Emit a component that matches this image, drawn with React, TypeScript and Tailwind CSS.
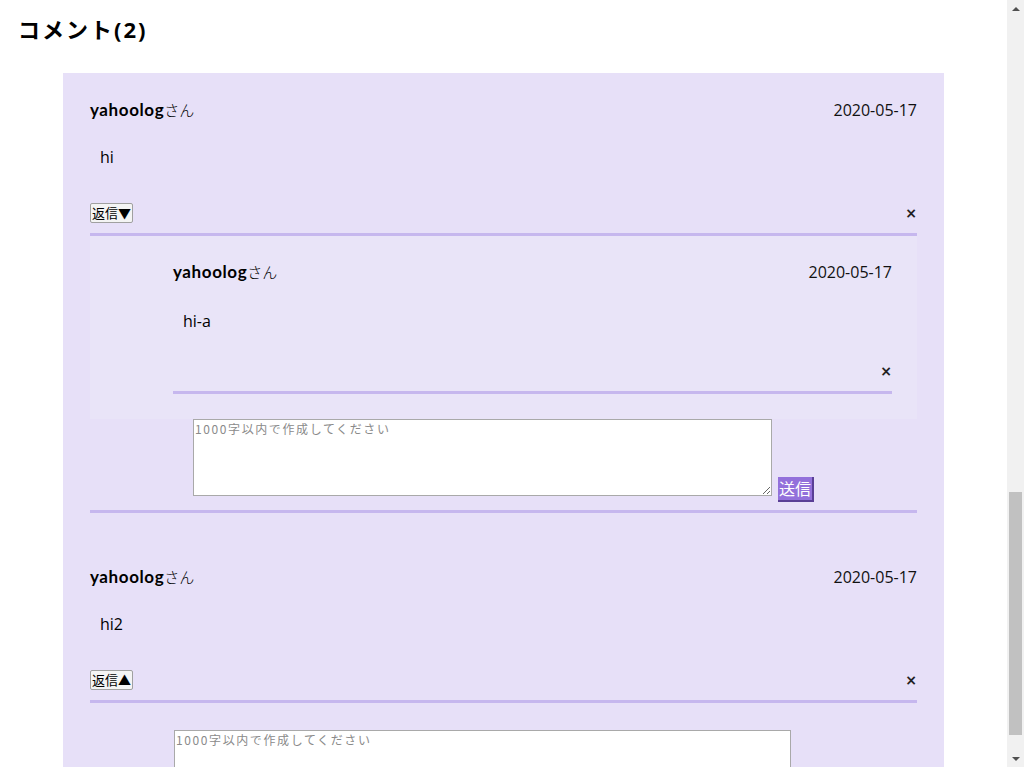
import { useState } from 'react';

interface Reply {
    id: number;
    user: string;
    date: string;
    body: string;
}

interface Comment {
    id: number;
    user: string;
    date: string;
    body: string;
    open: boolean;
    replies: Reply[];
}

const comments: Comment[] = [
    { id: 1, user: 'yahoolog', date: '2020-05-17', body: 'hi', open: true, replies: [{ id: 11, user: 'yahoolog', date: '2020-05-17', body: 'hi-a' }] },
    { id: 2, user: 'yahoolog', date: '2020-05-17', body: 'hi2', open: false, replies: [] },
];

const jp = "font-['Open_Sans','Noto_Sans_CJK_JP',sans-serif]";

function Header({ user, date }: { user: string; date: string }) {
    return (
        <div className="flex h-[24px] items-center justify-between text-[16px] text-black">
            <span>
                <span className="font-['Lato',sans-serif] text-[17px] font-bold tracking-[0.6px]">{user}</span>
                <span className="font-['Noto_Sans_CJK_JP',sans-serif] text-[15px] font-light">さん</span>
            </span>
            <span className={`${jp} text-[#111]`}>{date}</span>
        </div>
    );
}

function CloseMark() {
    return <span className="font-['DejaVu_Sans',sans-serif] text-[14px] font-bold leading-none text-[#222]">×</span>;
}

function ReplyForm({ indent, width }: { indent: string; width: string }) {
    return (
        <div className={`flex items-start ${indent}`}>
            <textarea
                placeholder="1000字以内で作成してください"
                className={`h-[77px] ${width} resize border border-[#a9a9a9] bg-white px-[1px] py-0 font-['Noto_Sans_CJK_JP',sans-serif] text-[12px] leading-[18px] tracking-[1.6px] placeholder:text-[#8a8a8a]`}
            />
            <button className="ml-[6px] mt-[58px] h-[25px] border-r-2 border-b-2 border-[#5a3f96] bg-[#9370db] px-[1px] font-['Noto_Sans_CJK_JP',sans-serif] text-[16px] leading-[23px] text-white">
                送信
            </button>
        </div>
    );
}

function ScrollBar() {
    return (
        <div className="sticky top-0 flex h-screen w-[17px] shrink-0 flex-col bg-[#f1f1f1]">
            <div className="flex h-[17px] items-center justify-center">
                <div className="h-0 w-0 border-x-[4px] border-b-[4px] border-x-transparent border-b-[#505050]" />
            </div>
            <div className="flex-1">
                <div className="mx-[2px] mt-[475px] h-[243px] bg-[#c1c1c1]" />
            </div>
            <div className="flex h-[17px] items-center justify-center">
                <div className="h-0 w-0 border-x-[4px] border-t-[4px] border-x-transparent border-t-[#505050]" />
            </div>
        </div>
    );
}

export default function App() {
    const [items] = useState<Comment[]>(comments);

    return (
        <div className={`flex min-h-screen bg-white ${jp}`}>
            <main className="w-[1007px] shrink-0 pb-[4px]">
                <h2 className="pl-[18px] pt-[13px] text-[22px] font-bold leading-[32px] tracking-[2px] text-black">
                    コメント(2)
                </h2>
                <div className="mx-auto mt-[28px] w-[881px] bg-[#e7e0f8] px-[27px] pt-[25px] pb-[20px]">
                    {items.map((c, i) => (
                        <div key={c.id} className={i > 0 ? 'mt-[52px]' : ''}>
                            <Header user={c.user} date={c.date} />
                            <p className="mt-[23px] h-[24px] pl-[10px] text-[16px] leading-[24px] text-black">{c.body}</p>
                            <div className="mt-[33px] flex h-[22px] items-center justify-between">
                                <button className="h-[20px] rounded-[2px] border border-[#a0a0a0] bg-[#f4f4f4] px-[1px] font-['Noto_Sans_CJK_JP',sans-serif] text-[13px] leading-[18px] text-black">
                                    返信{c.open ? '▼' : '▲'}
                                </button>
                                <CloseMark />
                            </div>
                            <div className="mt-[9px] h-[3px] bg-[#c6b7ee]" />
                            {c.open ? (
                                <>
                                    {c.replies.map(r => (
                                        <div key={r.id} className="bg-[#e9e4f8] pl-[83px] pr-[25px] pt-[24px] pb-[25px]">
                                            <Header user={r.user} date={r.date} />
                                            <p className="mt-[25px] h-[24px] pl-[10px] text-[16px] leading-[24px] text-black">{r.body}</p>
                                            <div className="mt-[27px] flex h-[22px] items-center justify-end">
                                                <CloseMark />
                                            </div>
                                            <div className="mt-[9px] h-[3px] bg-[#c6b7ee]" />
                                        </div>
                                    ))}
                                    <ReplyForm indent="pl-[103px]" width="w-[579px]" />
                                    <div className="mt-[8px] h-[3px] bg-[#c6b7ee]" />
                                </>
                            ) : (
                                <div className="mt-[27px]">
                                    <ReplyForm indent="pl-[84px]" width="w-[617px]" />
                                </div>
                            )}
                        </div>
                    ))}
                </div>
            </main>
            <ScrollBar />
        </div>
    );
}
